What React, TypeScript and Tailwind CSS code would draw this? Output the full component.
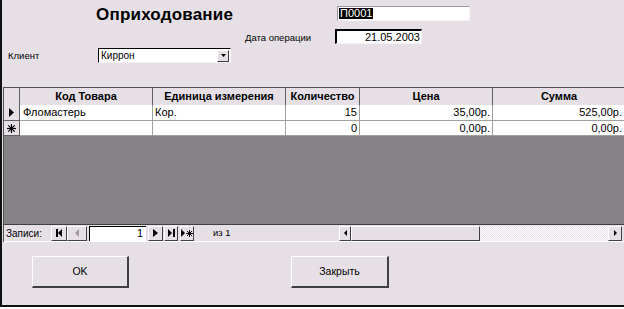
const font = "font-['Liberation_Sans','Noto_Sans',sans-serif]";

const cols = "grid grid-cols-[16px_133px_133px_74px_133px_132px]";

const Raised = ({ className = "", children }: { className?: string; children?: React.ReactNode }) => (
  <div
    className={`flex items-center justify-center bg-[#e6e0e6] border-t border-l border-t-white border-l-white border-r border-b border-r-[#404040] border-b-[#404040] ${className}`}
  >
    {children}
  </div>
);

const Tri = ({ dir = "r", w = 5, h = 8 }: { dir?: "r" | "l"; w?: number; h?: number }) => (
  <svg width={w} height={h} viewBox={`0 0 ${w} ${h}`}>
    <polygon points={dir === "r" ? `0,0 ${w},${h / 2} 0,${h}` : `${w},0 0,${h / 2} ${w},${h}`} fill="currentColor" />
  </svg>
);

const Star = ({ s = 9 }: { s?: number }) => (
  <svg width={s} height={s} viewBox="0 0 9 9" stroke="black" strokeWidth="1.2">
    <line x1="4.5" y1="0" x2="4.5" y2="9" />
    <line x1="0" y1="4.5" x2="9" y2="4.5" />
    <line x1="1.3" y1="1.3" x2="7.7" y2="7.7" />
    <line x1="7.7" y1="1.3" x2="1.3" y2="7.7" />
  </svg>
);

export default function App() {
  return (
    <div className={`w-[624px] h-[309px] bg-white overflow-hidden ${font} text-black`}>
      <div className="h-[307px] bg-[#e6e0e6] border-l-2 border-b-2 border-[#111] flex flex-col">
        {/* header fields */}
        <div className="h-[27px] flex items-start">
          <div className="pl-[94px] pt-[5px] w-[335px] text-[17px] leading-[20px] font-bold tracking-[0.2px]">
            Оприходование
          </div>
          <div className="mt-[6px] w-[133px] h-[15px] bg-white border-t border-l border-[#a09aa0] border-r border-b border-r-[#f4f0f4] border-b-[#f4f0f4] flex items-center pl-[1px]">
            <span className="bg-black text-white text-[11px] leading-[11px] px-[1px]">П0001</span>
          </div>
        </div>
        <div className="h-[20px] flex items-start">
          <div className="pl-[243px] pt-[5px] w-[333px] text-[9.5px] leading-[11px]">Дата операции</div>
          <div className="mt-[2px] w-[87px] h-[15px] bg-white border-t-2 border-l-2 border-black border-r border-b border-r-[#f4f0f4] border-b-[#f4f0f4] flex items-center justify-end pr-[1px] text-[11px] leading-[11px] overflow-hidden whitespace-nowrap">
            21.05.2003
          </div>
        </div>
        <div className="h-[40px] flex items-start">
          <div className="pl-[6px] pt-[3px] w-[96px] text-[9.5px] leading-[11px]">Клиент</div>
          <div className="mt-[1px] w-[133px] h-[15px] bg-white border-t border-l border-black border-r border-b border-r-[#f4f0f4] border-b-[#f4f0f4] flex items-center">
            <span className="flex-1 pl-[2px] text-[10px] leading-[11px]">Киррон</span>
            <Raised className="w-[12px] h-[12px] mr-[1px]">
              <svg width="5" height="3" viewBox="0 0 5 3">
                <polygon points="0,0 5,0 2.5,3" fill="black" />
              </svg>
            </Raised>
          </div>
        </div>

        {/* datasheet */}
        <div className="ml-[1px] h-[155px] border-t border-l border-[#505050] flex flex-col">
          <div className={`${cols} h-[17px] text-[11px] font-bold`}>
            <div className="border-r border-b border-[#606060]" />
            <div className="border-r border-b border-[#606060] flex items-center justify-center">Код Товара</div>
            <div className="border-r border-b border-[#606060] flex items-center justify-center">Единица измерения</div>
            <div className="border-r border-b border-[#606060] flex items-center justify-center">Количество</div>
            <div className="border-r border-b border-[#606060] flex items-center justify-center">Цена</div>
            <div className="border-b border-[#606060] flex items-center justify-center">Сумма</div>
          </div>
          <div className={`${cols} h-[16px] text-[11px] leading-[15px] bg-white`}>
            <div className="bg-[#e6e0e6] border-r border-b border-[#606060] flex items-center justify-center">
              <Tri w={5} h={9} />
            </div>
            <div className="border-r border-b border-[#a0a0a0] pl-[3px]">Фломастерь</div>
            <div className="border-r border-b border-[#a0a0a0] pl-[2px]">Кор.</div>
            <div className="border-r border-b border-[#a0a0a0] pr-[2px] text-right">15</div>
            <div className="border-r border-b border-[#a0a0a0] pr-[2px] text-right">35,00р.</div>
            <div className="border-b border-[#a0a0a0] pr-[3px] text-right">525,00р.</div>
          </div>
          <div className={`${cols} h-[15px] text-[11px] leading-[14px] bg-white`}>
            <div className="bg-[#e6e0e6] border-r border-b border-[#606060] flex items-center justify-center">
              <Star />
            </div>
            <div className="border-r border-b border-[#a0a0a0]" />
            <div className="border-r border-b border-[#a0a0a0]" />
            <div className="border-r border-b border-[#a0a0a0] pr-[2px] text-right">0</div>
            <div className="border-r border-b border-[#a0a0a0] pr-[2px] text-right">0,00р.</div>
            <div className="border-b border-[#a0a0a0] pr-[3px] text-right">0,00р.</div>
          </div>
          <div className="flex-1 bg-[#868386]" />
          {/* navigation bar */}
          <div className="h-[18px] flex items-center border-t border-[#404040] border-b border-b-white text-[10px]">
            <span className="pl-[2px] w-[47px]">Записи:</span>
            <Raised className="w-[16px] h-[15px]">
              <div className="w-[2px] h-[8px] bg-black" />
              <Tri dir="l" w={4} h={8} />
            </Raised>
            <Raised className="w-[20px] h-[15px] text-[#a09aa0]">
              <Tri dir="l" w={4} h={8} />
            </Raised>
            <div className="ml-[2px] w-[57px] h-[15px] bg-white border-t border-l border-black flex items-center justify-end pr-[3px] text-[11px]">
              1
            </div>
            <Raised className="ml-[2px] w-[15px] h-[15px]">
              <Tri w={5} h={8} />
            </Raised>
            <Raised className="ml-[1px] w-[14px] h-[15px] gap-[1px]">
              <Tri w={4} h={8} />
              <div className="w-[2px] h-[8px] bg-black" />
            </Raised>
            <Raised className="ml-[2px] w-[14px] h-[15px] gap-[1px]">
              <Tri w={4} h={8} />
              <Star s={7} />
            </Raised>
            <span className="pl-[19px] w-[145px] text-[9.5px]">из 1</span>
            <Raised className="w-[12px] h-[15px]">
              <Tri dir="l" w={3} h={6} />
            </Raised>
            <Raised className="w-[129px] h-[15px]" />
            <div className="w-[128px] h-[15px] bg-[repeating-conic-gradient(#ffffff_0_25%,#e6e0e6_0_50%)] bg-[length:2px_2px]" />
            <Raised className="w-[14px] h-[15px]">
              <Tri w={3} h={6} />
            </Raised>
          </div>
        </div>

        {/* buttons */}
        <div className="flex pt-[14px] text-[10.5px]">
          <Raised className="ml-[30px] w-[97px] h-[32px] border-r-2 border-b-2 border-r-[#303030] border-b-[#303030]">OK</Raised>
          <Raised className="ml-[162px] w-[98px] h-[32px] border-r-2 border-b-2 border-r-[#303030] border-b-[#303030]">Закрыть</Raised>
        </div>
      </div>
    </div>
  );
}
